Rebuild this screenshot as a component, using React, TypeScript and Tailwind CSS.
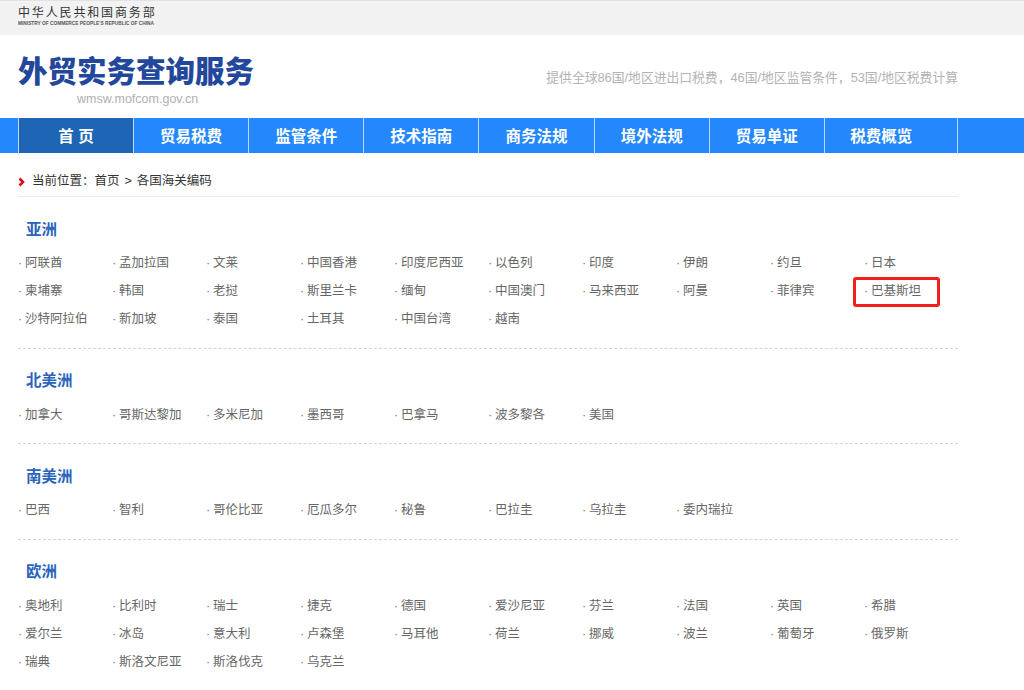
const navItems = ["首 页", "贸易税费", "监管条件", "技术指南", "商务法规", "境外法规", "贸易单证", "税费概览"];

const regions = [
  {
    name: "亚洲",
    countries: ["阿联酋", "孟加拉国", "文莱", "中国香港", "印度尼西亚", "以色列", "印度", "伊朗", "约旦", "日本", "柬埔寨", "韩国", "老挝", "斯里兰卡", "缅甸", "中国澳门", "马来西亚", "阿曼", "菲律宾", "巴基斯坦", "沙特阿拉伯", "新加坡", "泰国", "土耳其", "中国台湾", "越南"],
  },
  { name: "北美洲", countries: ["加拿大", "哥斯达黎加", "多米尼加", "墨西哥", "巴拿马", "波多黎各", "美国"] },
  { name: "南美洲", countries: ["巴西", "智利", "哥伦比亚", "厄瓜多尔", "秘鲁", "巴拉圭", "乌拉圭", "委内瑞拉"] },
  {
    name: "欧洲",
    countries: ["奥地利", "比利时", "瑞士", "捷克", "德国", "爱沙尼亚", "芬兰", "法国", "英国", "希腊", "爱尔兰", "冰岛", "意大利", "卢森堡", "马耳他", "荷兰", "挪威", "波兰", "葡萄牙", "俄罗斯", "瑞典", "斯洛文尼亚", "斯洛伐克", "乌克兰"],
  },
];

function Region({ name, countries, last }: { name: string; countries: string[]; last: boolean }) {
  return (
    <section className={last ? "pt-[20.5px]" : "border-b border-dashed border-[#d4d4d4] pt-[20.5px] pb-[14.5px]"}>
      <h2 className="h-[24px] pl-[8px] text-[15.5px] leading-[24px] font-bold text-[#2a64bb]">{name}</h2>
      <ul className={"grid grid-cols-[repeat(10,94px)] " + (last ? "mt-[8px]" : "mt-[7.5px]")}>
        {countries.map((country) => (
          <li key={country} className="relative h-[28px] text-[12.5px] leading-[28px] whitespace-nowrap text-[#666]">
            <span className="inline-block w-[7px] text-[#777]">·</span>
            {country}
            {country === "巴基斯坦" && (
              <span className="absolute top-0 left-[-11px] h-[30px] w-[87px] rounded-[3px] border-[3px] border-[#f0201a]" />
            )}
          </li>
        ))}
      </ul>
    </section>
  );
}

export default function App() {
  return (
    <div className="h-[690px] w-[1024px] overflow-hidden bg-white font-['Liberation_Sans','Noto_Sans_CJK_SC',sans-serif]">
      <div className="h-[35px] border-t border-[#e3e3e3] bg-[#f2f2f2] pt-[5px] pl-[18px]">
        <div className="text-[12px] leading-[14px] font-normal tracking-[1.85px] whitespace-nowrap text-[#333]">中华人民共和国商务部</div>
        <div className="mt-[1px] text-[4.8px] leading-[6px] font-bold whitespace-nowrap text-[#555]">MINISTRY OF COMMERCE PEOPLE'S REPUBLIC OF CHINA</div>
      </div>

      <header className="flex h-[83px] items-start justify-between pr-[66px] pl-[18px]">
        <div className="flex flex-col pt-[18px]">
          <div className="text-[29.5px] leading-[38px] font-black whitespace-nowrap text-[#23479b]">外贸实务查询服务</div>
          <div className="pt-[1px] pl-[59px] text-[12.5px] leading-[14px] text-[#b0b0b0]">wmsw.mofcom.gov.cn</div>
        </div>
        <p className="pt-[33px] text-[12.8px] leading-[20px] whitespace-nowrap text-[#b3b3b3]">提供全球86国/地区进出口税费，46国/地区监管条件，53国/地区税费计算</p>
      </header>

      <nav className="flex h-[35px] bg-[#2488fc] pl-[18px]">
        {navItems.map((item, i) => (
          <a
            key={item}
            className={
              "flex items-center justify-center border-r border-[#b9d9fd] pt-[3px] text-[15.5px] font-bold whitespace-nowrap text-white " +
              (i === 0 ? "w-[116px] border-l bg-[#1f65b6]" : i === 7 ? "w-[133px] pr-[19px]" : "w-[115.15px]")
            }
          >
            {item}
          </a>
        ))}
      </nav>

      <main className="w-[958px] pl-[18px]">
        <div className="flex h-[44px] items-center border-b border-[#ececec] pt-[14px] text-[12.5px] text-[#333]">
          <svg width="8" height="10" viewBox="0 0 8 10" className="mr-[6px]">
            <path d="M1.5 1.5 L5 5 L1.5 8.5" fill="none" stroke="#d9101a" strokeWidth="2.6" />
          </svg>
          当前位置：首页<span className="mx-[5px]">&gt;</span>各国海关编码
        </div>
        {regions.map((region, i) => (
          <Region key={region.name} name={region.name} countries={region.countries} last={i === regions.length - 1} />
        ))}
      </main>
    </div>
  );
}
